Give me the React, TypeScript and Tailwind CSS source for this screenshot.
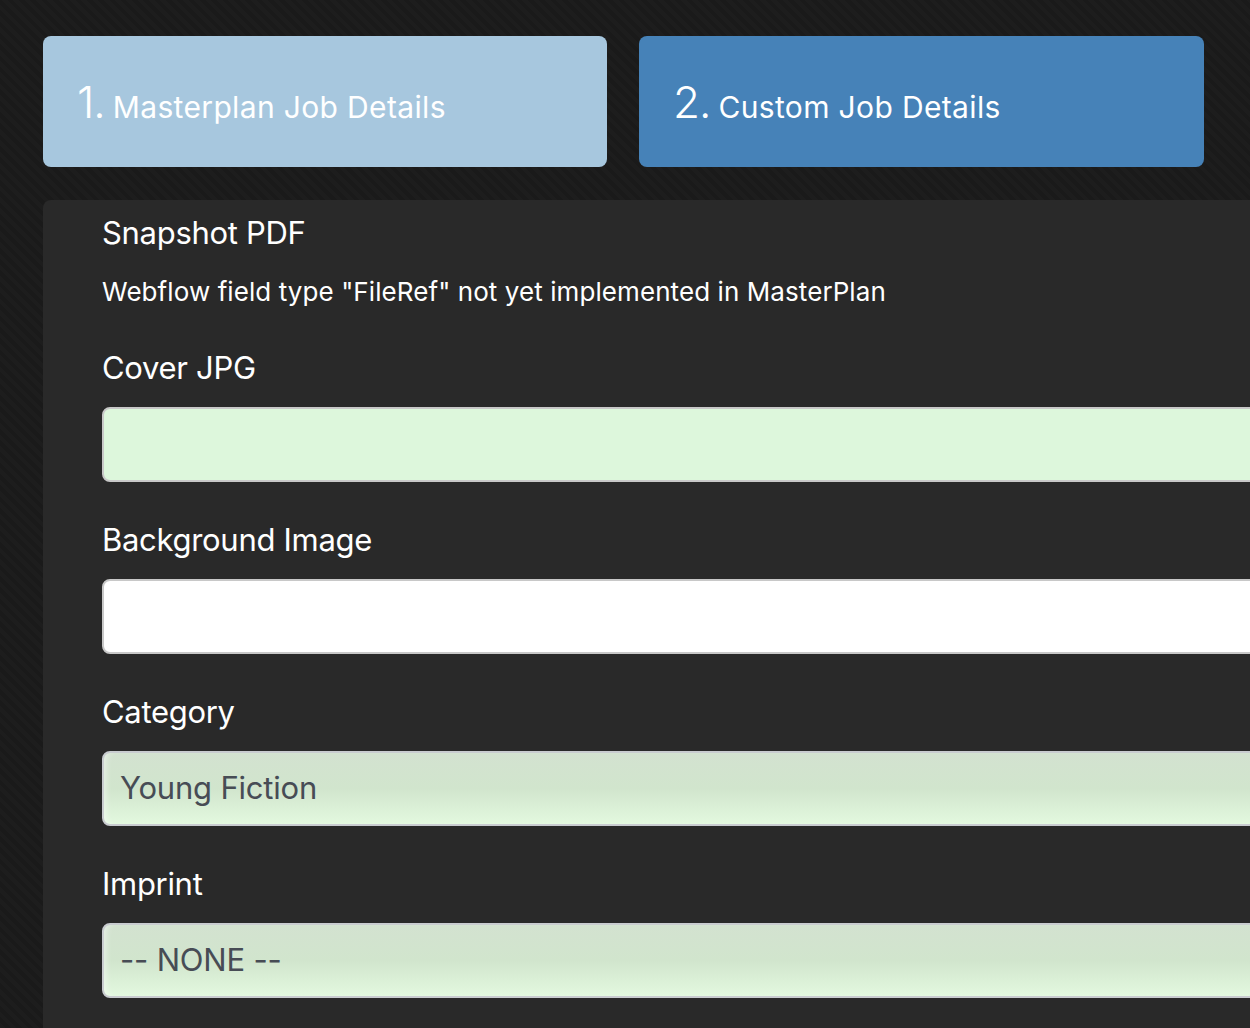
import React from 'react'

// ── Tabs ───────────────────────────────────────────────────────────────────────
function StepTab({ num, label, active }: { num: string; label: string; active?: boolean }) {
  return (
    <div
      className={
        'h-[131px] rounded-lg flex items-center pl-[34px] text-white ' +
        (active ? 'w-[565px] bg-[#4682b8]' : 'w-[564px] bg-[#a7c7de]')
      }
    >
      <span className="flex items-baseline gap-[8px]">
        <span className="text-[44px] font-light leading-none tracking-[-1px]">{num}</span>
        <span className="text-[30px] leading-none tracking-[0.35px]">{label}</span>
      </span>
    </div>
  )
}

// ── Form fields ────────────────────────────────────────────────────────────────
function Label({ children }: { children: React.ReactNode }) {
  return <div className="text-[31px] leading-[37px] tracking-[-0.3px] text-white">{children}</div>
}

function TextField({ label, green }: { label: string; green?: boolean }) {
  return (
    <div className="mb-[39px]">
      <div className="mb-[21px]">
        <Label>{label}</Label>
      </div>
      <div
        className={
          'h-[75px] w-full rounded-lg border-2 border-[#c8c8c8] ' +
          (green ? 'bg-[#ddf7dc]' : 'bg-white')
        }
      />
    </div>
  )
}

function SelectField({ label, value }: { label: string; value: string }) {
  return (
    <div className="mb-[39px]">
      <div className="mb-[21px]">
        <Label>{label}</Label>
      </div>
      <div className="h-[75px] w-full rounded-lg border-2 border-[#c9ccd0] bg-gradient-to-b from-[#d3e2d0] via-[#d1e5cd] to-[#e3f9df] shadow-[inset_6px_0_6px_-4px_rgba(255,255,255,0.5)] flex items-center pl-[16px]">
        <span className="text-[31px] tracking-[-0.2px] text-[#474c55]">{value}</span>
      </div>
    </div>
  )
}

// ── App ────────────────────────────────────────────────────────────────────────
export default function App() {
  return (
    <div className="h-screen w-full overflow-hidden bg-[#1c1c1c] bg-[repeating-linear-gradient(45deg,#1d1d1d_0px,#1d1d1d_4px,#1a1a1a_4px,#1a1a1a_8px)] font-['Inter',sans-serif]">
      <div className="w-[1460px] pl-[43px] pt-[36px]">
        <div className="flex gap-8">
          <StepTab num="1." label="Masterplan Job Details" />
          <StepTab num="2." label="Custom Job Details" active />
        </div>

        <div className="mt-[33px] bg-[#292929] rounded-tl-lg pl-[59px] pt-[14px] pb-10">
          <Label>Snapshot PDF</Label>
          <p className="mt-[25px] mb-[41px] text-[26px] leading-[32px] tracking-[0.08px] text-white">
            Webflow field type "FileRef" not yet implemented in MasterPlan
          </p>

          <TextField label="Cover JPG" green />
          <TextField label="Background Image" />
          <SelectField label="Category" value="Young Fiction" />
          <SelectField label="Imprint" value="-- NONE --" />
        </div>
      </div>
    </div>
  )
}
